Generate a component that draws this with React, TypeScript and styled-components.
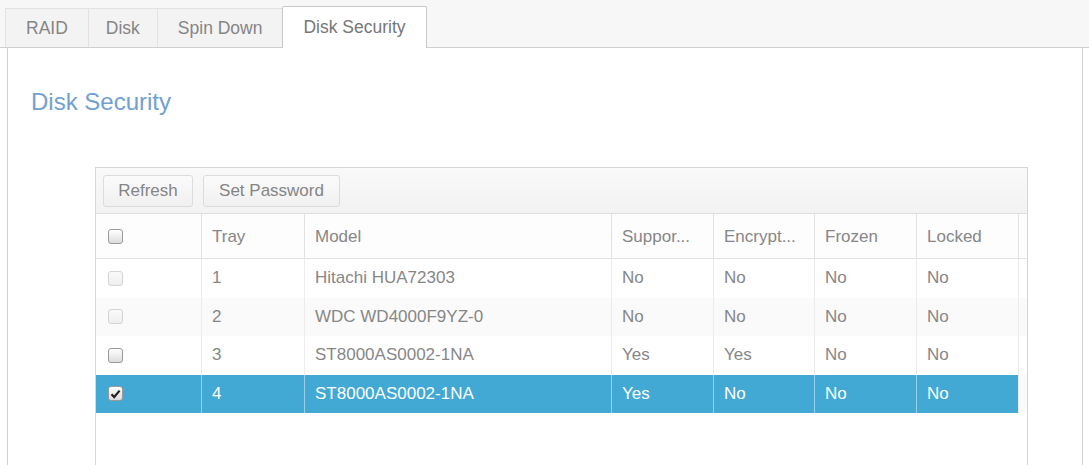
import React from "react";
import styled, { createGlobalStyle, css } from "styled-components";

const GlobalStyle = createGlobalStyle`
  html, body {
    margin: 0;
    padding: 0;
    background: #ffffff;
    font-family: "Liberation Sans", Arial, sans-serif;
  }
`;

const Page = styled.div`
  width: 1089px;
  height: 465px;
  overflow: hidden;
`;

const TabBar = styled.div`
  height: 47px;
  background: #f7f7f7;
  border-bottom: 1px solid #cfcfcf;
  padding-left: 5px;
  display: flex;
  align-items: flex-end;
`;

const Tab = styled.div<{ $active?: boolean; $pad: number }>`
  height: 39px;
  padding: 0 ${(p) => p.$pad}px;
  display: flex;
  align-items: center;
  font-size: 17.5px;
  color: #858585;
  background: #f3f3f3;
  border: 1px solid #e2e2e2;
  border-bottom: none;
  margin-right: -1px;
  box-sizing: border-box;

  ${(p) =>
    p.$active &&
    css`
      height: 42px;
      margin-bottom: -1px;
      background: #ffffff;
      border-color: #c8c8c8;
      border-radius: 2px 2px 0 0;
      color: #777;
      padding-bottom: 1px;
      position: relative;
      z-index: 1;
    `}
`;

const Panel = styled.div`
  margin: 0 6px 0 7px;
  border-left: 1px solid #d2d2d2;
  border-right: 1px solid #d2d2d2;
  padding: 40px 0 0 23px;
  height: 420px;
  box-sizing: border-box;
`;

const Heading = styled.h2`
  margin: 0;
  font-weight: normal;
  font-size: 24px;
  line-height: 28px;
  color: #72a0d2;
`;

const Grid = styled.div`
  margin: 51px 0 0 64px;
  width: 933px;
  border: 1px solid #d6d6d6;
  box-sizing: border-box;
`;

const Toolbar = styled.div`
  height: 46px;
  box-sizing: border-box;
  background: linear-gradient(#f9f9f9, #f2f2f2);
  border-bottom: 1px solid #dedede;
  padding: 5px 7px;
  display: flex;
  gap: 10px;
  align-items: center;
`;

const ToolButton = styled.button<{ $width: number }>`
  width: ${(p) => p.$width}px;
  height: 32px;
  border: 1px solid #dcdcdc;
  border-radius: 3px;
  background: linear-gradient(#fbfbfb, #f0f0f0);
  font-family: "Liberation Sans", Arial, sans-serif;
  font-size: 17px;
  color: #858585;
  padding: 0;
`;

const columns = "105px 103px 307px 102px 101px 102px 102px 1fr";

const HeaderRow = styled.div`
  display: grid;
  grid-template-columns: ${columns};
  height: 44px;
  background: #fdfdfd;
  border-bottom: 1px solid #e2e2e2;
`;

const HeaderCell = styled.div`
  display: flex;
  align-items: center;
  padding: 2px 6px 0 10px;
  font-size: 17px;
  color: #878787;
  white-space: nowrap;
  border-left: 1px solid #e2e2e2;
`;

const Body = styled.div`
  height: 260px;
`;

const Row = styled.div<{ $selected?: boolean; $alt?: boolean }>`
  display: grid;
  grid-template-columns: ${columns};
  height: 38.5px;
  background: ${(p) => (p.$alt ? "#fafafa" : "#ffffff")};
  color: #878787;

  ${(p) =>
    p.$selected &&
    css`
      color: #ffffff;
      & > div:not(:last-child) {
        background: #42a9d4;
      }
      & > div:not(:first-child):not(:last-child) {
        border-left-color: rgba(255, 255, 255, 0.45);
      }
    `}
`;

const Cell = styled.div`
  display: flex;
  align-items: center;
  padding: 0 10px;
  font-size: 17px;
  white-space: nowrap;
  border-left: 1px solid #ececec;
`;

const Filler = styled.div`
  border-left: 1px solid #ececec;
`;

const CheckCell = styled.div`
  display: flex;
  align-items: center;
  padding-left: 12px;
`;

const Check = styled.span<{ $disabled?: boolean }>`
  width: 15px;
  height: 15px;
  box-sizing: border-box;
  border-radius: 3px;
  border: 1px solid ${(p) => (p.$disabled ? "#d4d4d4" : "#9a9a9a")};
  background: ${(p) =>
    p.$disabled
      ? "linear-gradient(#fafafa, #eeeeee)"
      : "linear-gradient(#ffffff, #dcdcdc)"};
  display: flex;
  align-items: center;
  justify-content: center;
`;

const CheckBox = ({ checked, disabled }: { checked?: boolean; disabled?: boolean }) => (
  <Check $disabled={disabled}>
    {checked && (
      <svg width="11" height="10" viewBox="0 0 11 10">
        <path d="M1.5 5.2 L4.2 8 L9.6 1.6" fill="none" stroke="#222" strokeWidth="2.2" />
      </svg>
    )}
  </Check>
);

const disks = [
  { tray: "1", model: "Hitachi HUA72303", supported: "No", encrypted: "No", frozen: "No", locked: "No", disabled: true },
  { tray: "2", model: "WDC WD4000F9YZ-0", supported: "No", encrypted: "No", frozen: "No", locked: "No", disabled: true },
  { tray: "3", model: "ST8000AS0002-1NA", supported: "Yes", encrypted: "Yes", frozen: "No", locked: "No" },
  { tray: "4", model: "ST8000AS0002-1NA", supported: "Yes", encrypted: "No", frozen: "No", locked: "No", selected: true },
];

const tabs = [
  { label: "RAID", pad: 20 },
  { label: "Disk", pad: 17 },
  { label: "Spin Down", pad: 20 },
  { label: "Disk Security", pad: 20, active: true },
];

const headers = ["Tray", "Model", "Suppor...", "Encrypt...", "Frozen", "Locked"];

export default function App() {
  return (
    <Page>
      <GlobalStyle />
      <TabBar>
        {tabs.map((t) => (
          <Tab key={t.label} $active={t.active} $pad={t.pad}>
            {t.label}
          </Tab>
        ))}
      </TabBar>
      <Panel>
        <Heading>Disk Security</Heading>
        <Grid>
          <Toolbar>
            <ToolButton $width={90}>Refresh</ToolButton>
            <ToolButton $width={137}>Set Password</ToolButton>
          </Toolbar>
          <HeaderRow>
            <CheckCell>
              <CheckBox />
            </CheckCell>
            {headers.map((h) => (
              <HeaderCell key={h}>{h}</HeaderCell>
            ))}
            <HeaderCell />
          </HeaderRow>
          <Body>
            {disks.map((d, i) => (
              <Row key={d.tray} $alt={i % 2 === 1} $selected={d.selected}>
                <CheckCell>
                  <CheckBox checked={d.selected} disabled={d.disabled} />
                </CheckCell>
                <Cell>{d.tray}</Cell>
                <Cell>{d.model}</Cell>
                <Cell>{d.supported}</Cell>
                <Cell>{d.encrypted}</Cell>
                <Cell>{d.frozen}</Cell>
                <Cell>{d.locked}</Cell>
                <Filler />
              </Row>
            ))}
          </Body>
        </Grid>
      </Panel>
    </Page>
  );
}
